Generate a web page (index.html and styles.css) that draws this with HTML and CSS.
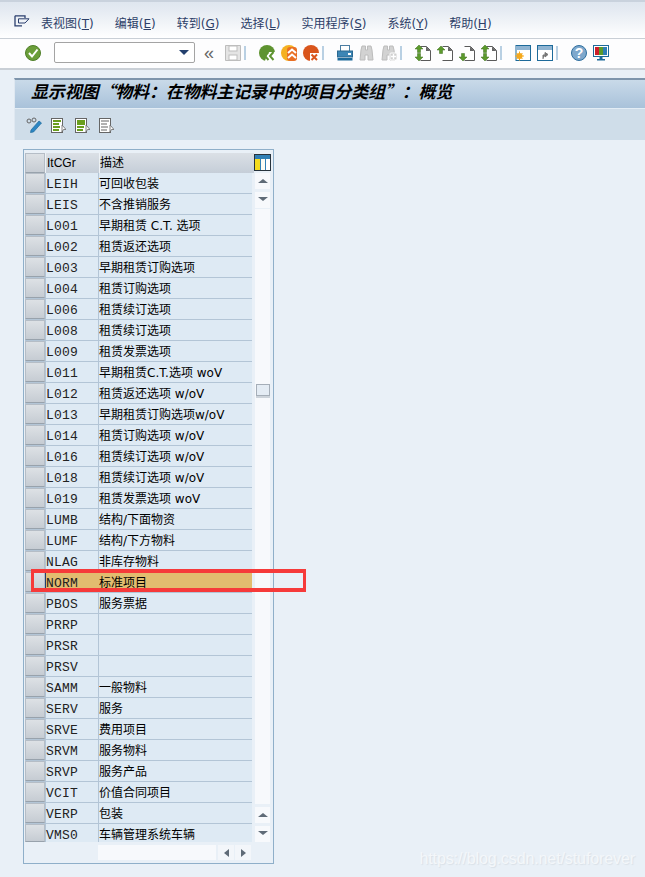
FILE: index.html
```html
<!DOCTYPE html>
<html lang="zh">
<head>
<meta charset="utf-8">
<title>显示视图</title>
<link rel="stylesheet" href="styles.css">
</head>
<body>
<svg class="defs" width="0" height="0" aria-hidden="true">
  <defs>
    <g id="page"><path d="M5.500 1.500H11.500L15.500 5.500V15.500H5.500" fill="#fff" stroke="#5a5a5a" stroke-width="1"/><path d="M11 1.500V6H15.500Z" fill="#666"/></g>
    <path id="up" d="M4 0L8 4H5.500V7.500H2.500V4H0Z" fill="#5c9a2c" stroke="#3c6e1c" stroke-width=".5"/>
    <path id="down" d="M4 8L8 4H5.500V.5H2.500V4H0Z" fill="#5c9a2c" stroke="#3c6e1c" stroke-width=".5"/>
    <g id="doc"><rect x="1.500" y="1.500" width="11" height="14" fill="#fff" stroke="#666"/><path d="M12 8L16 12.500H13.500L12 15Z" fill="#fff" stroke="#666" stroke-width=".8"/></g>
    <g id="bino"><path d="M2 5L3 1H6.500V5H8.500V1H12L13 5L14 15H9V10H6V15H1Z" fill="#d2d2d2" stroke="#bcbcbc"/></g>
  </defs>
</svg>

<header class="menubar">
  <svg class="menu-icon" width="16" height="12" viewBox="0 0 16 12"><path d="M1 .8H11V3M1 .8V10.800H8" fill="none" stroke="#2b3f6e" stroke-width="1.300"/><path d="M4.500 3.800H15L11 8H4.500Z" fill="none" stroke="#2b3f6e"/></svg>
  <nav class="menu">
    <span>表视图(<u>T</u>)</span>
    <span>编辑(<u>E</u>)</span>
    <span>转到(<u>G</u>)</span>
    <span>选择(<u>L</u>)</span>
    <span>实用程序(<u>S</u>)</span>
    <span>系统(<u>Y</u>)</span>
    <span>帮助(<u>H</u>)</span>
  </nav>
</header>

<div class="toolbar">
  <svg class="ok" width="16" height="16" viewBox="0 0 16 16"><circle cx="8" cy="8" r="7.500" fill="#6b9e3a" stroke="#4f7f29"/><path d="M4 8L7 11.500L12.500 4.500" fill="none" stroke="#fff" stroke-width="2"/></svg>
  <div class="combo"><span class="combo-arrow"></span></div>
  <span class="chev">«</span>
  <div class="tools">
    <span class="tool"><svg width="16" height="16" viewBox="0 0 16 16"><path d="M.5.5H15.500V15.500H.5Z" fill="#e4e4e4" stroke="#bdbdbd"/><rect x="4" y="1" width="8" height="5" fill="#fff" stroke="#bdbdbd"/><rect x="4" y="10" width="8" height="5" fill="#fff" stroke="#bdbdbd"/></svg></span>
    <span class="sep"></span>
    <span class="tool"><svg width="16" height="16" viewBox="0 0 16 16"><circle cx="8" cy="8" r="8" fill="#5e9330"/><path d="M9 7L16 7V16H6Z" fill="#fff"/><path d="M9.500 7L6 11L9.500 15M14.500 7L11 11L14.500 15" fill="none" stroke="#5e9330" stroke-width="2"/></svg></span>
    <span class="tool"><svg width="16" height="16" viewBox="0 0 16 16"><circle cx="8" cy="8" r="8" fill="#f5b122"/><rect x="6" y="2" width="10" height="14" fill="#e96f24" rx="3"/><path d="M7 8L11 4.500L15 8M7 13L11 9.500L15 13" fill="none" stroke="#fff" stroke-width="2"/></svg></span>
    <span class="tool"><svg width="16" height="16" viewBox="0 0 16 16"><circle cx="8" cy="8" r="8" fill="#d9551c"/><rect x="7" y="8" width="9" height="8" fill="#fff"/><path d="M8.500 9.500L14 15M14 9.500L8.500 15" stroke="#d9551c" stroke-width="2"/></svg></span>
    <span class="sep"></span>
    <span class="tool"><svg width="16" height="16" viewBox="0 0 16 16"><rect x="3.500" y=".5" width="9" height="6" fill="#fff" stroke="#4c7ea3"/><rect x=".5" y="6" width="15" height="6" fill="#3d86b5" stroke="#2a6890"/><rect x="11" y="8" width="3" height="2" fill="#fff"/><rect x=".5" y="13" width="15" height="2.500" fill="#1d6a9a"/></svg></span>
    <span class="tool"><svg width="16" height="16" viewBox="0 0 16 16"><use href="#bino"/></svg></span>
    <span class="tool"><svg width="16" height="16" viewBox="0 0 16 16"><use href="#bino"/><rect x="9" y="8" width="7" height="7" rx="1" fill="#cfcfcf" stroke="#fff"/><path d="M10 11.500H15M12.500 9V14" stroke="#fff" stroke-width="1.400"/></svg></span>
    <span class="sep"></span>
    <span class="tool"><svg width="16" height="16" viewBox="0 0 16 16"><use href="#page"/><use href="#up"/><use href="#down" y="8"/></svg></span>
    <span class="tool"><svg width="16" height="16" viewBox="0 0 16 16"><use href="#page"/><use href="#up" y="1"/></svg></span>
    <span class="tool"><svg width="16" height="16" viewBox="0 0 16 16"><use href="#page"/><use href="#down" y="8"/></svg></span>
    <span class="tool"><svg width="16" height="16" viewBox="0 0 16 16"><use href="#page"/><use href="#up"/><use href="#down" y="8"/></svg></span>
    <span class="sep"></span>
    <span class="tool"><svg width="16" height="16" viewBox="0 0 16 16"><rect x="1" y=".5" width="14.500" height="15" fill="#fff" stroke="#1d6a9a"/><rect x="1" y="1" width="14" height="4" fill="#8fb4d2"/><path d="M4.500 6.500V15.500M0 11H9M1.500 8L7.500 14M7.500 8L1.500 14" stroke="#f5a81c"/><circle cx="4.500" cy="11" r="3" fill="#f5a81c"/></svg></span>
    <span class="tool"><svg width="16" height="16" viewBox="0 0 16 16"><rect x=".5" y=".5" width="15" height="15" fill="#fff" stroke="#1d6a9a"/><rect x="1" y="1" width="14" height="4" fill="#8fb4d2"/><path d="M6 14V10H8M8 7.500L11 9.500L8 12Z" fill="#777" stroke="#777"/></svg></span>
    <span class="sep"></span>
    <span class="tool"><svg width="16" height="16" viewBox="0 0 16 16"><circle cx="8" cy="8" r="7.500" fill="#7fa8cc" stroke="#2f6f9f"/><text class="help-mark" x="8" y="13" text-anchor="middle">?</text></svg></span>
    <span class="tool"><svg width="16" height="16" viewBox="0 0 16 16"><rect x=".5" y=".5" width="15" height="11" fill="#fff" stroke="#1d6a9a"/><rect x="2" y="2" width="4" height="8" fill="#cc1f2a"/><rect x="6" y="2" width="4" height="8" fill="#5b9b2c"/><rect x="10" y="2" width="4" height="8" fill="#2f7fb5"/><path d="M6.500 12H9.500V14H12V15.500H4V14H6.500Z" fill="#1d6a9a"/></svg></span>
  </div>
</div>

<main class="screen">
  <h1 class="title">显示视图“物料：在物料主记录中的项目分类组”：概览</h1>
  <div class="apptools">
    <svg width="16" height="16" viewBox="0 0 16 16"><circle cx="3" cy="4" r="2" fill="none" stroke="#666"/><circle cx="8" cy="3" r="2" fill="none" stroke="#666"/><path d="M5 13L13 4L15.500 6L7.500 15L4.500 15.500Z" fill="#2d86c4" stroke="#1d6a9a" stroke-width=".7"/></svg>
    <svg width="16" height="16" viewBox="0 0 16 16"><use href="#doc"/><path d="M3 4H11M3 7H9M3 10H10M3 13H9" stroke="#6a9f1e" stroke-width="2"/></svg>
    <svg width="16" height="16" viewBox="0 0 16 16"><use href="#doc"/><rect x="3" y="3" width="8" height="5" fill="#6a9f1e"/><path d="M3 10H10M3 13H9" stroke="#6a9f1e" stroke-width="2"/></svg>
    <svg width="16" height="16" viewBox="0 0 16 16"><use href="#doc"/><path d="M3 4H11M3 7H9M3 10H10M3 13H9" stroke="#999" stroke-width="1.400"/></svg>
  </div>

  <section class="table-box">
    <div class="table-main">
      <div class="head">
        <span class="sel head-sel"></span>
        <span class="h-code">ItCGr</span>
        <span class="h-desc">描述</span>
        <svg class="cols" width="17" height="17" viewBox="0 0 17 17"><rect x=".5" y=".5" width="16" height="16" fill="#fff" stroke="#27333d"/><rect x="1" y="1" width="15" height="4" fill="#2f7fb5"/><rect x="1" y="5" width="5" height="11" fill="#f5dc1e"/><rect x="6" y="1" width="1" height="15" fill="#2f7fb5"/><rect x="11" y="1" width="1" height="15" fill="#2f7fb5"/><rect x="7" y="5" width="4" height="11" fill="#fbfcf4"/></svg>
      </div>
      <div class="body">
        <div class="rows">
          <div class="row"><span class="sel"></span><span class="code">LEIH</span><span class="desc">可回收包装</span></div>
          <div class="row"><span class="sel"></span><span class="code">LEIS</span><span class="desc">不含推销服务</span></div>
          <div class="row"><span class="sel"></span><span class="code">L001</span><span class="desc">早期租赁 C.T. 选项</span></div>
          <div class="row"><span class="sel"></span><span class="code">L002</span><span class="desc">租赁返还选项</span></div>
          <div class="row"><span class="sel"></span><span class="code">L003</span><span class="desc">早期租赁订购选项</span></div>
          <div class="row"><span class="sel"></span><span class="code">L004</span><span class="desc">租赁订购选项</span></div>
          <div class="row"><span class="sel"></span><span class="code">L006</span><span class="desc">租赁续订选项</span></div>
          <div class="row"><span class="sel"></span><span class="code">L008</span><span class="desc">租赁续订选项</span></div>
          <div class="row"><span class="sel"></span><span class="code">L009</span><span class="desc">租赁发票选项</span></div>
          <div class="row"><span class="sel"></span><span class="code">L011</span><span class="desc">早期租赁C.T.选项 woV</span></div>
          <div class="row"><span class="sel"></span><span class="code">L012</span><span class="desc">租赁返还选项 w/oV</span></div>
          <div class="row"><span class="sel"></span><span class="code">L013</span><span class="desc">早期租赁订购选项w/oV</span></div>
          <div class="row"><span class="sel"></span><span class="code">L014</span><span class="desc">租赁订购选项 w/oV</span></div>
          <div class="row"><span class="sel"></span><span class="code">L016</span><span class="desc">租赁续订选项 w/oV</span></div>
          <div class="row"><span class="sel"></span><span class="code">L018</span><span class="desc">租赁续订选项 w/oV</span></div>
          <div class="row"><span class="sel"></span><span class="code">L019</span><span class="desc">租赁发票选项 woV</span></div>
          <div class="row"><span class="sel"></span><span class="code">LUMB</span><span class="desc">结构/下面物资</span></div>
          <div class="row"><span class="sel"></span><span class="code">LUMF</span><span class="desc">结构/下方物料</span></div>
          <div class="row"><span class="sel"></span><span class="code">NLAG</span><span class="desc">非库存物料</span></div>
          <div class="row active"><span class="sel"></span><span class="code">NORM</span><span class="desc">标准项目</span></div>
          <div class="row"><span class="sel"></span><span class="code">PBOS</span><span class="desc">服务票据</span></div>
          <div class="row"><span class="sel"></span><span class="code">PRRP</span><span class="desc"></span></div>
          <div class="row"><span class="sel"></span><span class="code">PRSR</span><span class="desc"></span></div>
          <div class="row"><span class="sel"></span><span class="code">PRSV</span><span class="desc"></span></div>
          <div class="row"><span class="sel"></span><span class="code">SAMM</span><span class="desc">一般物料</span></div>
          <div class="row"><span class="sel"></span><span class="code">SERV</span><span class="desc">服务</span></div>
          <div class="row"><span class="sel"></span><span class="code">SRVE</span><span class="desc">费用项目</span></div>
          <div class="row"><span class="sel"></span><span class="code">SRVM</span><span class="desc">服务物料</span></div>
          <div class="row"><span class="sel"></span><span class="code">SRVP</span><span class="desc">服务产品</span></div>
          <div class="row"><span class="sel"></span><span class="code">VCIT</span><span class="desc">价值合同项目</span></div>
          <div class="row"><span class="sel"></span><span class="code">VERP</span><span class="desc">包装</span></div>
          <div class="row last"><span class="sel"></span><span class="code">VMS0</span><span class="desc">车辆管理系统车辆</span></div>
        </div>
        <div class="vscroll">
          <span class="sbtn"><i class="tri-up"></i></span>
          <span class="sbtn"><i class="tri-down"></i></span>
          <span class="track"><span class="thumb"></span></span>
          <span class="sbtn"><i class="tri-up"></i></span>
          <span class="sbtn"><i class="tri-down"></i></span>
        </div>
      </div>
      <div class="hscroll">
        <span class="htrack"></span>
        <span class="hbtn"><i class="tri-left"></i></span>
        <span class="hbtn"><i class="tri-right"></i></span>
      </div>
    </div>
  </section>
</main>

<div class="marker"></div>
<div class="watermark">https://blog.csdn.net/stuforever</div>
</body>
</html>
```

FILE: styles.css
```css
* { box-sizing: border-box; }
html, body { margin: 0; padding: 0; }
body {
  width: 645px;
  height: 877px;
  overflow: hidden;
  position: relative;
  background: #e9f0f7;
  font-family: "DejaVu Sans", "Noto Sans CJK SC", sans-serif;
  font-size: 12px;
  color: #000;
}
.defs { position: absolute; }

.menubar {
  height: 39px;
  display: flex;
  padding: 13px 0 0 14px;
  background: linear-gradient(#dfe6ef 0, #e3e9f1 6px, #fbfcfd 32px, #fff 100%);
  border-top: 2px solid #c9d2dd;
  border-bottom: 1px solid #c9cfd6;
}
.menu-icon { display: block; }
.menu { display: flex; margin-left: 11px; gap: 21px; color: #2d4068; font-size: 12px; line-height: 18px; white-space: nowrap; }

.toolbar {
  height: 31px;
  display: flex;
  align-items: center;
  padding: 0 0 2px 25px;
  background: #fdfdfe;
  border-bottom: 2px solid #c9cfd6;
}
.ok { display: block; }
.combo {
  width: 141px;
  height: 21px;
  margin-left: 13px;
  position: relative;
  background: #fff;
  border: 1px solid #a4a4a4;
  border-radius: 2px;
}
.combo-arrow {
  position: absolute;
  right: 5px;
  top: 7px;
  border-left: 5px solid transparent;
  border-right: 5px solid transparent;
  border-top: 5px solid #24406e;
}
.chev { width: 14px; margin-left: 9px; color: #666; font-size: 18px; line-height: 18px; font-family: "Liberation Sans", sans-serif; }
.tools { display: flex; align-items: center; margin-left: 7px; }
.tool { width: 22px; display: flex; flex: none; }
.tool svg { display: block; }
.sep { width: 2px; height: 14px; margin: 0 13px 0 -3px; background: #b9d0e3; flex: none; }

.screen { padding: 8px 0 0 14px; }
.title {
  height: 31px;
  margin: 0;
  padding: 0 0 0 16px;
  font-family: "Noto Sans CJK SC", sans-serif;
  font-size: 17px;
  letter-spacing: -.15px;
  line-height: 22px;
  font-weight: 700;
  font-style: italic;
  color: #000;
  white-space: nowrap;
  background: linear-gradient(#c9dae9, #a9c2da);
  border-top: 2px solid #7e95ac;
  border-bottom: 1px solid #e3edf5;
  border-left: 1px solid #dfe8f1;
}
.apptools {
  height: 31px;
  display: flex;
  align-items: center;
  gap: 8px;
  padding-left: 11px;
  background: #cfdde9;
  border-left: 1px solid #dfe8f1;
}
.apptools svg { display: block; }

.table-box { padding: 9px 0 0 9px; }
.table-main {
  width: 251px;
  height: 715px;
  padding: 2px 1px 0 1px;
  background: #e9f0f7;
  border: 1px solid #8fafc9;
}
.head { height: 21px; display: flex; align-items: center; }
.head-sel { height: 20px; }
.h-code, .h-desc {
  height: 20px;
  line-height: 20px;
  background: linear-gradient(#dbe0e6, #c5ced8);
  border-left: 1px solid #eef2f6;
}
.h-code { width: 54px; padding-left: 1px; font-family: "Liberation Sans", sans-serif; }
.h-desc { width: 155px; padding-left: 0; }
.cols { display: block; }
.body { display: flex; }
.rows { width: 227px; flex: none; }
.row { height: 21px; display: flex; border-bottom: 1px solid #b3c5d6; background: #deeaf4; }
.row.last { border-bottom: 0; height: 18px; overflow: hidden; }
.sel {
  width: 20px;
  flex: none;
  background: linear-gradient(#dde1e5, #c6ccd3);
  border: 1px solid #b5bdc6;
  border-bottom-color: #98a2ac;
}
.code {
  width: 54px;
  padding: 1px 0 0;
  font-family: "Liberation Mono", monospace;
  font-size: 13px;
  letter-spacing: .2px;
  line-height: 22px;
  color: #222;
  border-right: 1px solid #b3c5d6;
  border-left: 1px solid #b3c5d6;
}
.desc { flex: 1; padding-top: 1px; line-height: 21px; white-space: nowrap; overflow: hidden; }
.row.active { background: #e2bc6f; }
.row.active .code { border-left-color: #24406e; border-right-color: #e2bc6f; }

.vscroll {
  width: 15px;
  margin-left: 3px;
  display: flex;
  flex-direction: column;
  gap: 3px;
}
.sbtn {
  height: 16px;
  flex: none;
  display: flex;
  align-items: center;
  justify-content: center;
  background: #f7f9fc;
}
.track { flex: 1; margin-top: -2px; background: #f7f9fc; position: relative; }
.thumb {
  position: absolute;
  left: 1px;
  top: 175px;
  width: 14px;
  height: 12px;
  background: #e4ecf4;
  border: 1px solid #a5aeb8;
  box-shadow: 0 2px 0 #ccd3da;
}
.tri-up, .tri-down, .tri-left, .tri-right { display: block; width: 0; height: 0; }
.tri-up { border: 4px solid transparent; border-top: 0; border-bottom: 4px solid #5f6b77; border-left-width: 5px; border-right-width: 5px; }
.tri-down { border: 4px solid transparent; border-bottom: 0; border-top: 4px solid #5f6b77; border-left-width: 5px; border-right-width: 5px; margin-bottom: 2px; }
.tri-left { border: 4px solid transparent; border-left: 0; border-right: 5px solid #5f6b77; }
.tri-right { border: 4px solid transparent; border-right: 0; border-left: 5px solid #5f6b77; }

.hscroll { height: 18px; display: flex; gap: 1px; padding: 3px 0 0 73px; }
.htrack { width: 118px; height: 15px; margin-right: 1px; background: #f7f9fc; }
.hbtn { width: 16px; height: 15px; display: flex; align-items: center; justify-content: center; background: #f3f6fa; }

.marker {
  position: absolute;
  left: 31px;
  top: 569px;
  width: 275px;
  height: 23px;
  border: solid #f63a3a;
  border-width: 4px 3px;
  pointer-events: none;
}
.watermark {
  position: absolute;
  right: 10px;
  top: 849px;
  font-family: "Liberation Sans", sans-serif;
  font-size: 16px;
  letter-spacing: -.1px;
  line-height: 20px;
  color: #f4f7fa;
  text-shadow: 1px 1px 1px #d9e0e7;
}
.help-mark { font-family: "Liberation Sans", sans-serif; font-size: 14px; font-weight: 700; fill: #fff; }
```
